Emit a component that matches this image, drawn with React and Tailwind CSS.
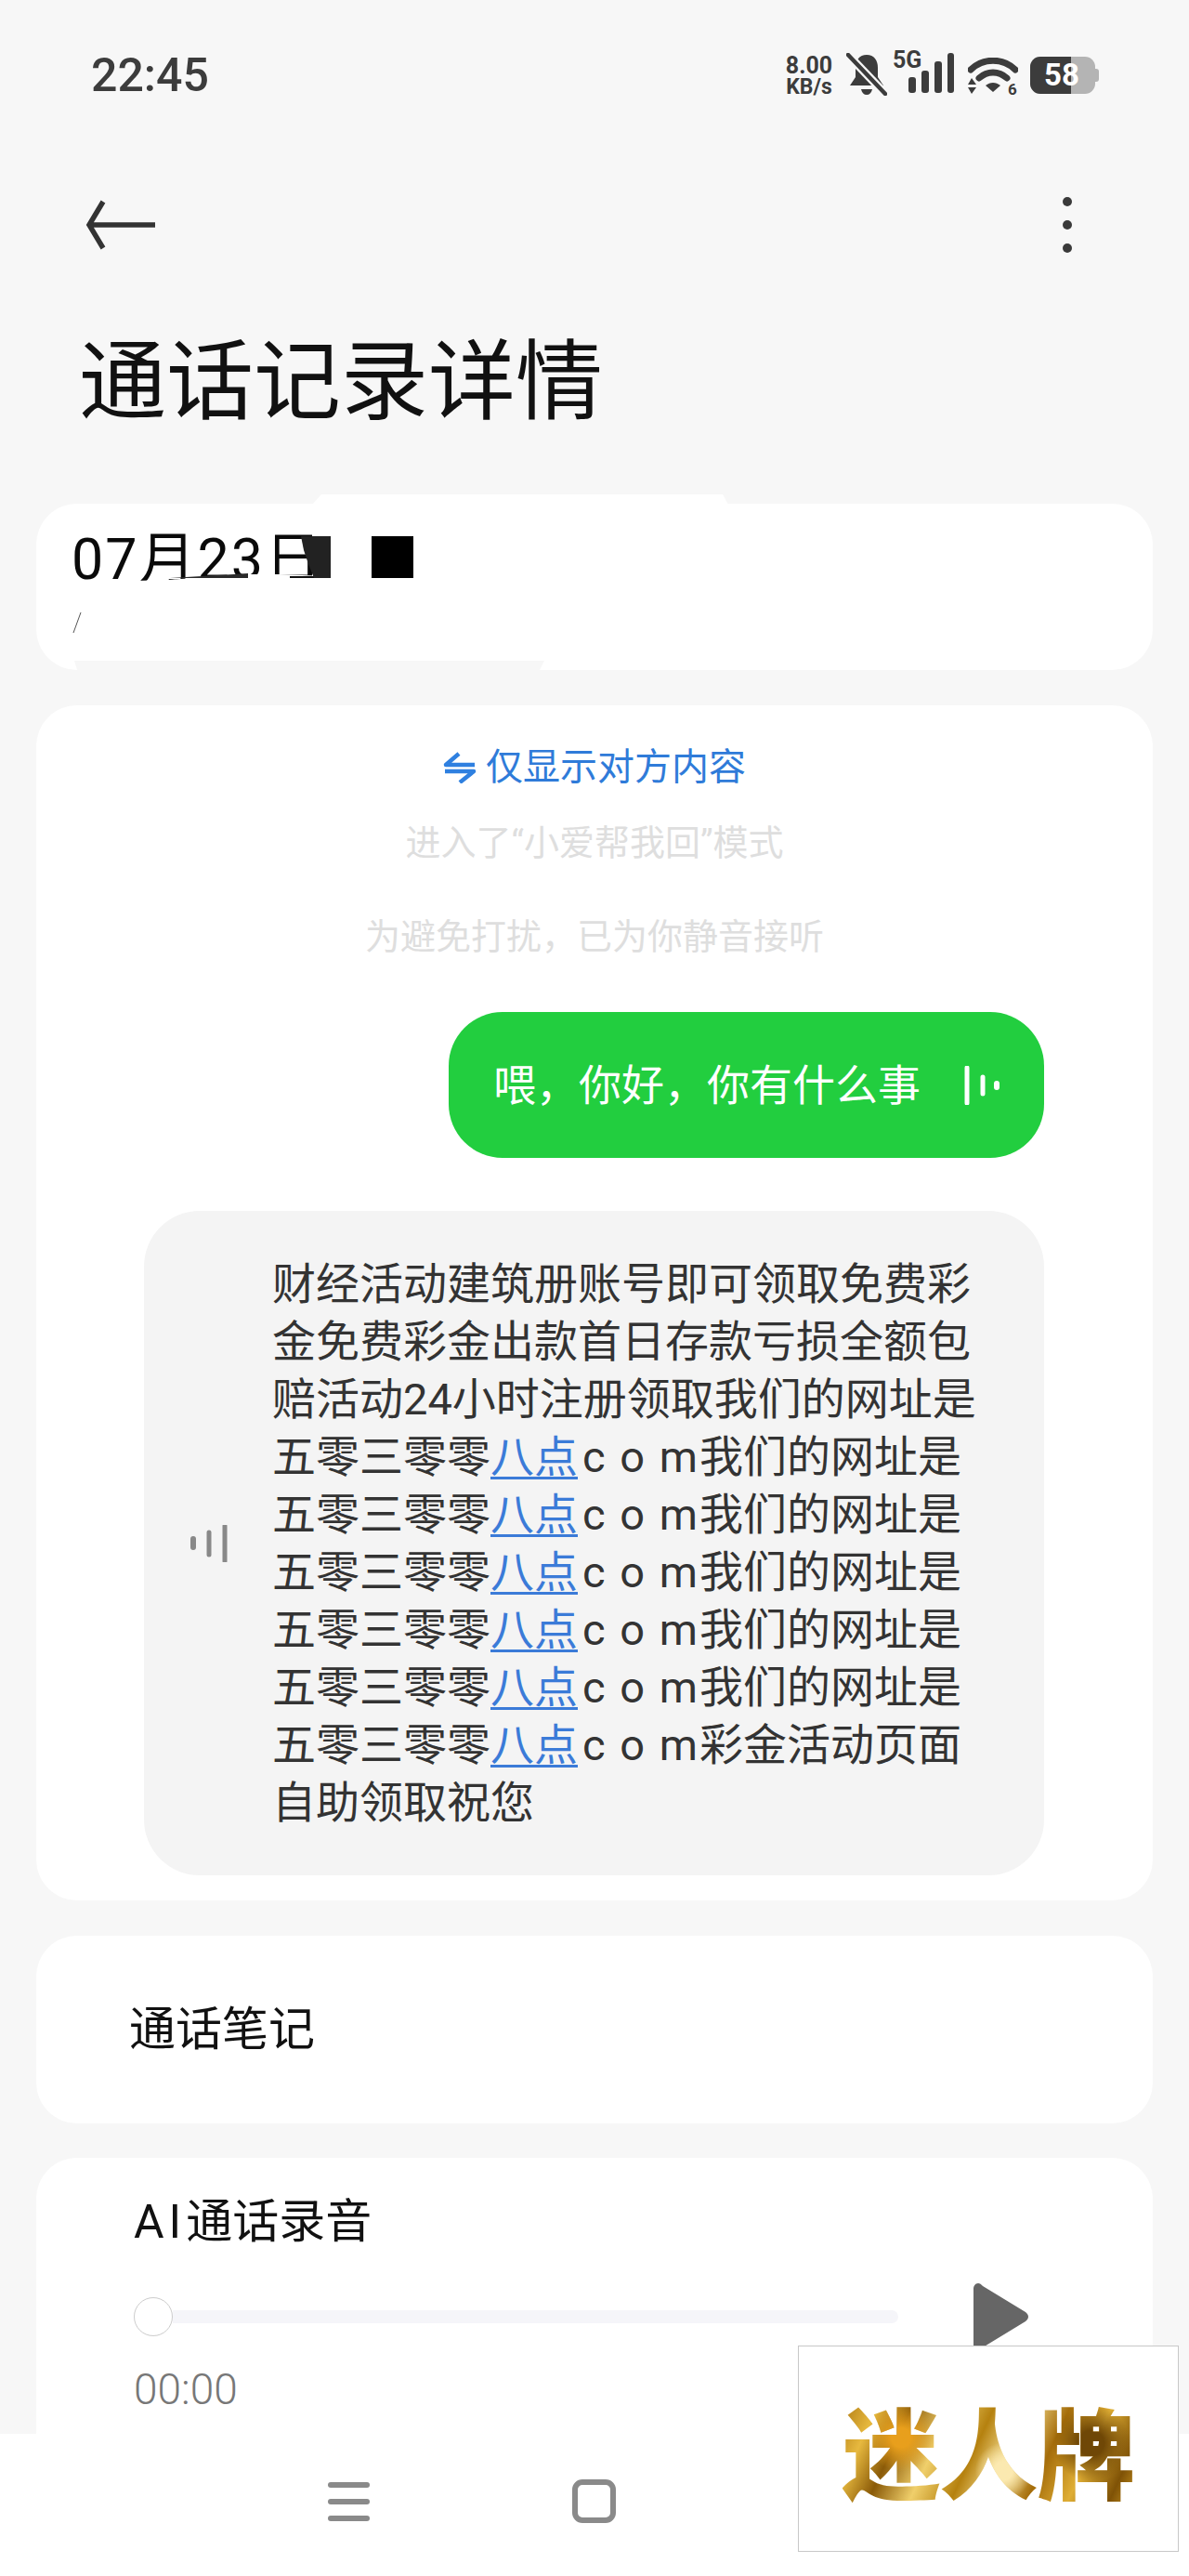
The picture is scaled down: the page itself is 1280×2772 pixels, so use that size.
import React from "react";

const FONT = { fontFamily: '"Roboto","Noto Sans CJK SC",sans-serif' };

function StatusIcons() {
  return (
    <div className="flex items-start h-[46px] mt-[57px] mr-[97px] text-[#3c3c3c]">
      <div className="w-[60px] flex flex-col items-center font-bold text-[25px] leading-[28px]">
        <span className="h-[28px]">8.00</span>
        <span className="h-[18px] text-[23px] leading-[18px]">KB/s</span>
      </div>
      <svg className="ml-[10px]" width="44" height="46" viewBox="0 0 44 46">
        <path d="M22 2c8 0 12 6 12 14v10l6 9H4l6-9V16c0-8 4-14 12-14z" fill="#3c3c3c" />
        <path d="M16 39h12c-1 4-3 6-6 6s-5-2-6-6z" fill="#3c3c3c" />
        <path d="M1 1l41 43" stroke="#f7f7f7" strokeWidth="9" />
        <path d="M2 2l40 42" stroke="#3c3c3c" strokeWidth="4.5" strokeLinecap="round" />
      </svg>
      <div className="relative w-[66px] h-[44px] ml-[6px]">
        <span className="absolute left-0 top-[-6px] font-bold text-[25px] leading-[28px]">5G</span>
        <svg className="absolute left-0 top-0" width="66" height="44" viewBox="0 0 66 44">
          <rect x="17" y="26" width="8" height="17" rx="3" fill="#3c3c3c" />
          <rect x="31" y="19" width="8" height="24" rx="3" fill="#3c3c3c" />
          <rect x="45" y="9" width="8" height="34" rx="3" fill="#3c3c3c" />
          <rect x="59" y="0" width="7" height="43" rx="3" fill="#3c3c3c" />
        </svg>
      </div>
      <svg className="ml-[15px] mt-[5px]" width="54" height="41" viewBox="0 0 54 41">
        <path d="M3 13C16 0 38 0 51 13" fill="none" stroke="#3c3c3c" strokeWidth="7" strokeLinecap="round" />
        <path d="M12 22c9-8 21-8 30 0" fill="none" stroke="#3c3c3c" strokeWidth="7" strokeLinecap="round" />
        <path d="M19 30c5-4 11-4 16 0l-8 7z" fill="#3c3c3c" />
        <path d="M4 22l5 7H0zM4 39l5-7H0z" fill="#3c3c3c" />
        <text x="43" y="40" fontSize="17" fontWeight="700" fill="#3c3c3c" fontFamily="Roboto">6</text>
      </svg>
      <div className="relative ml-[13px] w-[74px] h-[40px] mt-[4px]">
        <div className="absolute left-0 top-0 w-[70px] h-[40px] rounded-[11px] bg-[#b4b4b4]" />
        <div className="absolute right-0 top-[13px] w-[5px] h-[14px] rounded-r-[3px] bg-[#b4b4b4]" />
        <div className="absolute left-0 top-0 w-[44px] h-[40px] rounded-l-[11px] bg-[#3c3c3c]" />
        <span className="absolute left-[15px] top-0 text-white font-bold text-[33px] leading-[40px]">58</span>
      </div>
    </div>
  );
}

function Url({ tail }) {
  return (
    <div className="whitespace-pre">
      五零三零零<span className="text-[#3b7bd8] underline decoration-[3px] underline-offset-[5px]">八点</span>
      <span className="tracking-[2px] ml-[5px]">c o m</span>
      {tail}
    </div>
  );
}

export default function App() {
  return (
    <div className="w-[1280px] h-[2772px] flex flex-col bg-[#f7f7f7] overflow-hidden relative" style={FONT}>
      <div className="flex-1 min-h-0 overflow-hidden flex flex-col">
        <div className="flex justify-between h-[180px] shrink-0">
          <div className="ml-[98px] mt-[53px] text-[50px] leading-[56px] font-medium text-[#3c3c3c]">22:45</div>
          <StatusIcons />
        </div>

        <div className="flex justify-between items-center h-[60px] shrink-0 mt-[32px] pl-[90px] pr-[125px]">
          <svg width="80" height="56" viewBox="0 0 80 56">
            <path d="M77 28H8M21 3L6 28l15 25" fill="none" stroke="#333" strokeWidth="5.5" />
          </svg>
          <svg width="12" height="62" viewBox="0 0 12 62">
            <circle cx="6" cy="6" r="5" fill="#3a3a3a" />
            <circle cx="6" cy="31" r="5" fill="#3a3a3a" />
            <circle cx="6" cy="56" r="5" fill="#3a3a3a" />
          </svg>
        </div>

        <h1 className="ml-[85px] mt-[85px] text-[94px] leading-[110px] font-normal text-[#111] shrink-0">通话记录详情</h1>

        <div className="relative mx-[39px] mt-[75px] h-[179px] shrink-0 bg-white rounded-[44px]">
          <div className="pl-[38px] pt-[24px] text-[61px] leading-[72px] tracking-[2px] text-[#0a0a0a]">07月23日</div>
          <div className="absolute left-[36px] top-[70px] w-[300px] h-[40px] bg-white [clip-path:polygon(0_15px,105px_12px,192px_6px,225px_6px,300px_9px,300px_40px,0_40px)]" />
          <div className="absolute left-[144px] top-[75px] w-[84px] h-[5px] bg-[#2a2a2a] [clip-path:polygon(0_5px,84px_0,84px_5px)]" />
          <div className="absolute left-[273px] top-[78px] w-[26px] h-[2px] bg-[#111]" />
          <div className="absolute left-[285px] top-[35px] w-[32px] h-[45px] bg-[#222] [clip-path:polygon(0_0,32px_0,32px_45px,14px_45px,8px_30px,3px_15px)]" />
          <div className="absolute left-[361px] top-[35px] w-[45px] h-[45px] bg-black" />
          <svg className="absolute left-[39px] top-[117px]" width="10" height="23" viewBox="0 0 10 23">
            <path d="M9 0L1 22" stroke="#555" strokeWidth="1" />
          </svg>
          <div className="absolute left-[297px] top-[-10px] w-[448px] h-[11px] bg-white [clip-path:polygon(10px_0,442px_0,448px_11px,0_11px)]" />
          <div className="absolute left-[41px] top-[169px] w-[506px] h-[10px] bg-[#f7f7f7] [clip-path:polygon(0_0,506px_0,501px_10px,3px_10px)]" />
        </div>

        <div className="mx-[39px] mt-[38px] h-[1286px] shrink-0 bg-white rounded-[44px] flex flex-col">
          <div className="flex items-center justify-center mt-[43px] text-[40px] leading-[48px] text-[#2f7bd9]">
            <svg className="mr-[10px]" width="36" height="34" viewBox="0 0 36 34">
              <path d="M34 14H3L17 2" fill="none" stroke="#2f80e0" strokeWidth="4.5" strokeLinejoin="round" />
              <path d="M2 21h31L18 33" fill="none" stroke="#2f80e0" strokeWidth="4.5" strokeLinejoin="round" />
            </svg>
            仅显示对方内容
          </div>
          <div className="text-center mt-[34px] text-[38px] leading-[46px] text-[#dedede]">进入了“小爱帮我回”模式</div>
          <div className="text-center mt-[55px] text-[38px] leading-[46px] text-[#dedede]">为避免打扰，已为你静音接听</div>

          <div className="self-end mr-[117px] mt-[58px] w-[641px] h-[157px] rounded-[58px] bg-[#22ce3f] flex items-center pl-[48px] text-white text-[46px] leading-[54px]">
            <span className="w-[506px] whitespace-nowrap">喂，你好，你有什么事</span>
            <svg width="42" height="42" viewBox="0 0 42 42">
              <path d="M4 2v38M21 12v18" stroke="#fff" strokeWidth="5" strokeLinecap="round" />
              <path d="M36 19v4" stroke="#fff" strokeWidth="6" strokeLinecap="round" />
            </svg>
          </div>

          <div className="self-end mr-[117px] mt-[57px] w-[969px] h-[715px] rounded-[60px] bg-[#f4f4f4] flex items-center">
            <svg className="ml-[49px]" width="42" height="40" viewBox="0 0 42 40">
              <path d="M4 15v9" stroke="#888" strokeWidth="6" strokeLinecap="round" />
              <path d="M21 8v24" stroke="#888" strokeWidth="5" strokeLinecap="round" />
              <path d="M38 1v38" stroke="#888" strokeWidth="5" strokeLinecap="round" />
            </svg>
            <div className="ml-[47px] text-[47px] leading-[62px] text-[#333]">
              <div className="whitespace-pre">财经活动建筑册账号即可领取免费彩</div>
              <div className="whitespace-pre">金免费彩金出款首日存款亏损全额包</div>
              <div className="whitespace-pre">赔活动24小时注册领取我们的网址是</div>
              <Url tail="我们的网址是" />
              <Url tail="我们的网址是" />
              <Url tail="我们的网址是" />
              <Url tail="我们的网址是" />
              <Url tail="我们的网址是" />
              <Url tail="彩金活动页面" />
              <div className="whitespace-pre">自助领取祝您</div>
            </div>
          </div>
        </div>

        <div className="mx-[39px] mt-[38px] h-[202px] shrink-0 bg-white rounded-[44px] flex items-center pl-[100px]">
          <span className="text-[50px] leading-[60px] text-[#111]">通话笔记</span>
        </div>

        <div className="mx-[39px] mt-[37px] h-[400px] shrink-0 bg-white rounded-[44px] pl-[105px]">
          <div className="pt-[39px] text-[50px] leading-[60px] text-[#111]">
            <span className="tracking-[5px]">AI</span>通话录音
          </div>
          <div className="flex items-center mt-[36px] h-[72px]">
            <div className="w-[42px] h-[42px] rounded-full bg-white border border-[#cccccc] shrink-0" />
            <div className="w-[781px] h-[14px] rounded-r-[7px] bg-[#f5f5f9]" />
            <svg className="ml-[81px]" width="60" height="72" viewBox="0 0 60 72">
              <path d="M5 0c-3 0-5 3-5 6v60c0 3 2 6 5 6 2 0 3-1 5-3l46-28c4-3 4-7 0-10L10 3C8 1 7 0 5 0z" fill="#666" />
            </svg>
          </div>
          <div className="mt-[17px] text-[46px] leading-[50px] font-light text-[#777]">00:00</div>
        </div>
      </div>

      <div className="h-[153px] shrink-0 bg-white flex items-start pl-[353px] pt-[49px]">
        <div className="w-[45px] flex flex-col gap-[12px] mt-[3px]">
          <div className="h-[6px] rounded-full bg-[#8a8a8a]" />
          <div className="h-[6px] rounded-full bg-[#8a8a8a]" />
          <div className="h-[6px] rounded-full bg-[#8a8a8a]" />
        </div>
        <div className="ml-[218px] w-[47px] h-[47px] rounded-[11px] border-[6px] border-[#8a8a8a]" />
      </div>

      <div className="absolute left-[859px] top-[2524px] w-[410px] h-[222px] bg-white border border-[#c8c8c8] flex items-center justify-center">
        <span
          className="text-[106px] leading-[120px] font-black tracking-[-1px] whitespace-nowrap bg-clip-text text-transparent bg-[radial-gradient(circle_at_20%_40%,#e89f1c_0,#e89f1c_4%,transparent_14%),radial-gradient(circle_at_55%_70%,#fbe9b0_0,#fbe9b0_5%,transparent_16%),radial-gradient(circle_at_85%_45%,#6f4706_0,#6f4706_5%,transparent_15%),linear-gradient(115deg,#a8710c_0%,#e7b93f_12%,#8a5a08_22%,#f0cf6b_34%,#b5810f_46%,#f4dc8f_56%,#a56d0a_68%,#dfae35_80%,#7f5206_92%,#c99522_100%)]"
          style={{ fontFamily: '"Noto Sans CJK SC",sans-serif' }}
        >
          迷人牌
        </span>
      </div>
    </div>
  );
}
